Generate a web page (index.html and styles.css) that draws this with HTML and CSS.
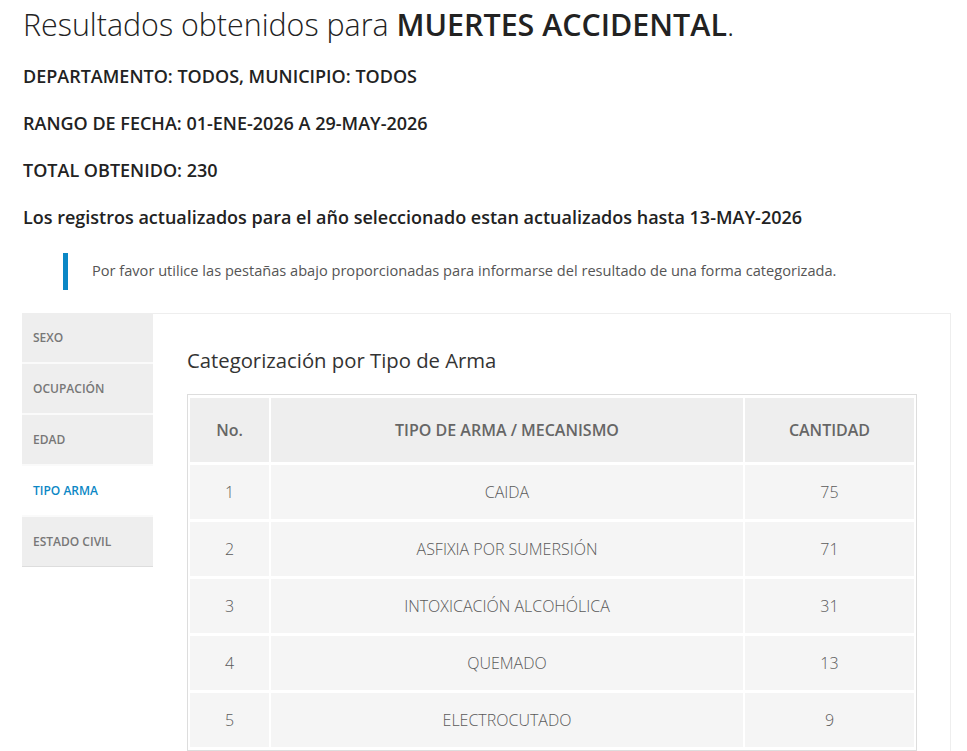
FILE: index.html
```html
<!DOCTYPE html>
<html lang="es">
<head>
<meta charset="utf-8">
<title>Resultados</title>
<link rel="stylesheet" href="styles.css">
</head>
<body>
<div class="page">
  <h1 class="title">Resultados obtenidos para <strong>MUERTES ACCIDENTAL</strong>.</h1>
  <h4 class="info">DEPARTAMENTO: TODOS, MUNICIPIO: TODOS</h4>
  <h4 class="info">RANGO DE FECHA: 01-ENE-2026 A 29-MAY-2026</h4>
  <h4 class="info">TOTAL OBTENIDO: 230</h4>
  <h4 class="info">Los registros actualizados para el año seleccionado estan actualizados hasta 13-MAY-2026</h4>
  <blockquote class="note">Por favor utilice las pestañas abajo proporcionadas para informarse del resultado de una forma categorizada.</blockquote>
  <div class="tabs">
    <ul class="tab-nav">
      <li class="tab">SEXO</li>
      <li class="tab">OCUPACIÓN</li>
      <li class="tab">EDAD</li>
      <li class="tab active">TIPO ARMA</li>
      <li class="tab">ESTADO CIVIL</li>
    </ul>
    <div class="tab-content">
      <h3 class="cat-title">Categorización por Tipo de Arma</h3>
      <table class="data">
        <thead>
          <tr><th class="c-no">No.</th><th class="c-tipo">TIPO DE ARMA / MECANISMO</th><th class="c-cant">CANTIDAD</th></tr>
        </thead>
        <tbody>
          <tr><td>1</td><td>CAIDA</td><td>75</td></tr>
          <tr><td>2</td><td>ASFIXIA POR SUMERSIÓN</td><td>71</td></tr>
          <tr><td>3</td><td>INTOXICACIÓN ALCOHÓLICA</td><td>31</td></tr>
          <tr><td>4</td><td>QUEMADO</td><td>13</td></tr>
          <tr><td>5</td><td>ELECTROCUTADO</td><td>9</td></tr>
        </tbody>
      </table>
    </div>
  </div>
</div>
</body>
</html>
```

FILE: styles.css
```css
html, body {
  margin: 0;
  padding: 0;
  background: #fff;
}
body {
  font-family: "Open Sans", "DejaVu Sans", sans-serif;
  color: #333;
}
.page {
  padding: 0 16px 0 22px;
}
.title {
  margin: 0;
  padding-top: 6px;
  font-size: 30.4px;
  font-weight: 300;
  line-height: 38px;
  color: #222;
  padding-left: 1px;
}
.title strong {
  font-weight: 600;
}
.info {
  margin: 0;
  padding-left: 1px;
  font-size: 18px;
  font-weight: 600;
  color: #222;
  line-height: 24px;
  margin-top: 23px;
}
.info:first-of-type {
  margin-top: 20px;
}
.note {
  margin: 24px 0 0 41px;
  padding: 6px 0 8px 24px;
  border-left: 5px solid #0b87c5;
  font-size: 14.6px;
  line-height: 23px;
  color: #555;
}
.tabs {
  display: flex;
  margin-top: 23px;
  border: 1px solid #eee;
  border-left: 0;
  min-height: 460px;
}
.tab-nav {
  list-style: none;
  margin: -1px 0 0 0;
  padding: 0;
  width: 131px;
  flex: none;
  align-self: flex-start;
  border-bottom: 1px solid #ddd;
}
.tab {
  height: 49px;
  line-height: 49px;
  padding-left: 11px;
  background: #eee;
  font-size: 12px;
  font-weight: 600;
  color: #777;
  border-bottom: 2px solid #fafafa;
}
.tab:last-child {
  border-bottom: 0;
}
.tab.active {
  background: #fff;
  color: #0b87c5;
}
.tab-content {
  flex: 1;
  padding: 31px 34px 0 34px;
}
.cat-title {
  margin: 0;
  font-size: 20.3px;
  font-weight: 400;
  line-height: 30px;
  color: #333;
}
.data {
  margin-top: 19px;
  width: 730px;
  border: 1px solid #ddd;
  border-spacing: 2px 3px;
  font-size: 16px;
}
.data th,
.data td {
  text-align: center;
  vertical-align: middle;
}
.data th {
  background: #eee;
  color: #666;
  font-weight: 600;
  height: 64px;
  padding: 0;
}
.data td {
  background: #f5f5f5;
  color: #5a5a5a;
  font-weight: 300;
  height: 54px;
  padding: 0;
}
.c-no { width: 79px; }
.c-cant { width: 169px; }
```
